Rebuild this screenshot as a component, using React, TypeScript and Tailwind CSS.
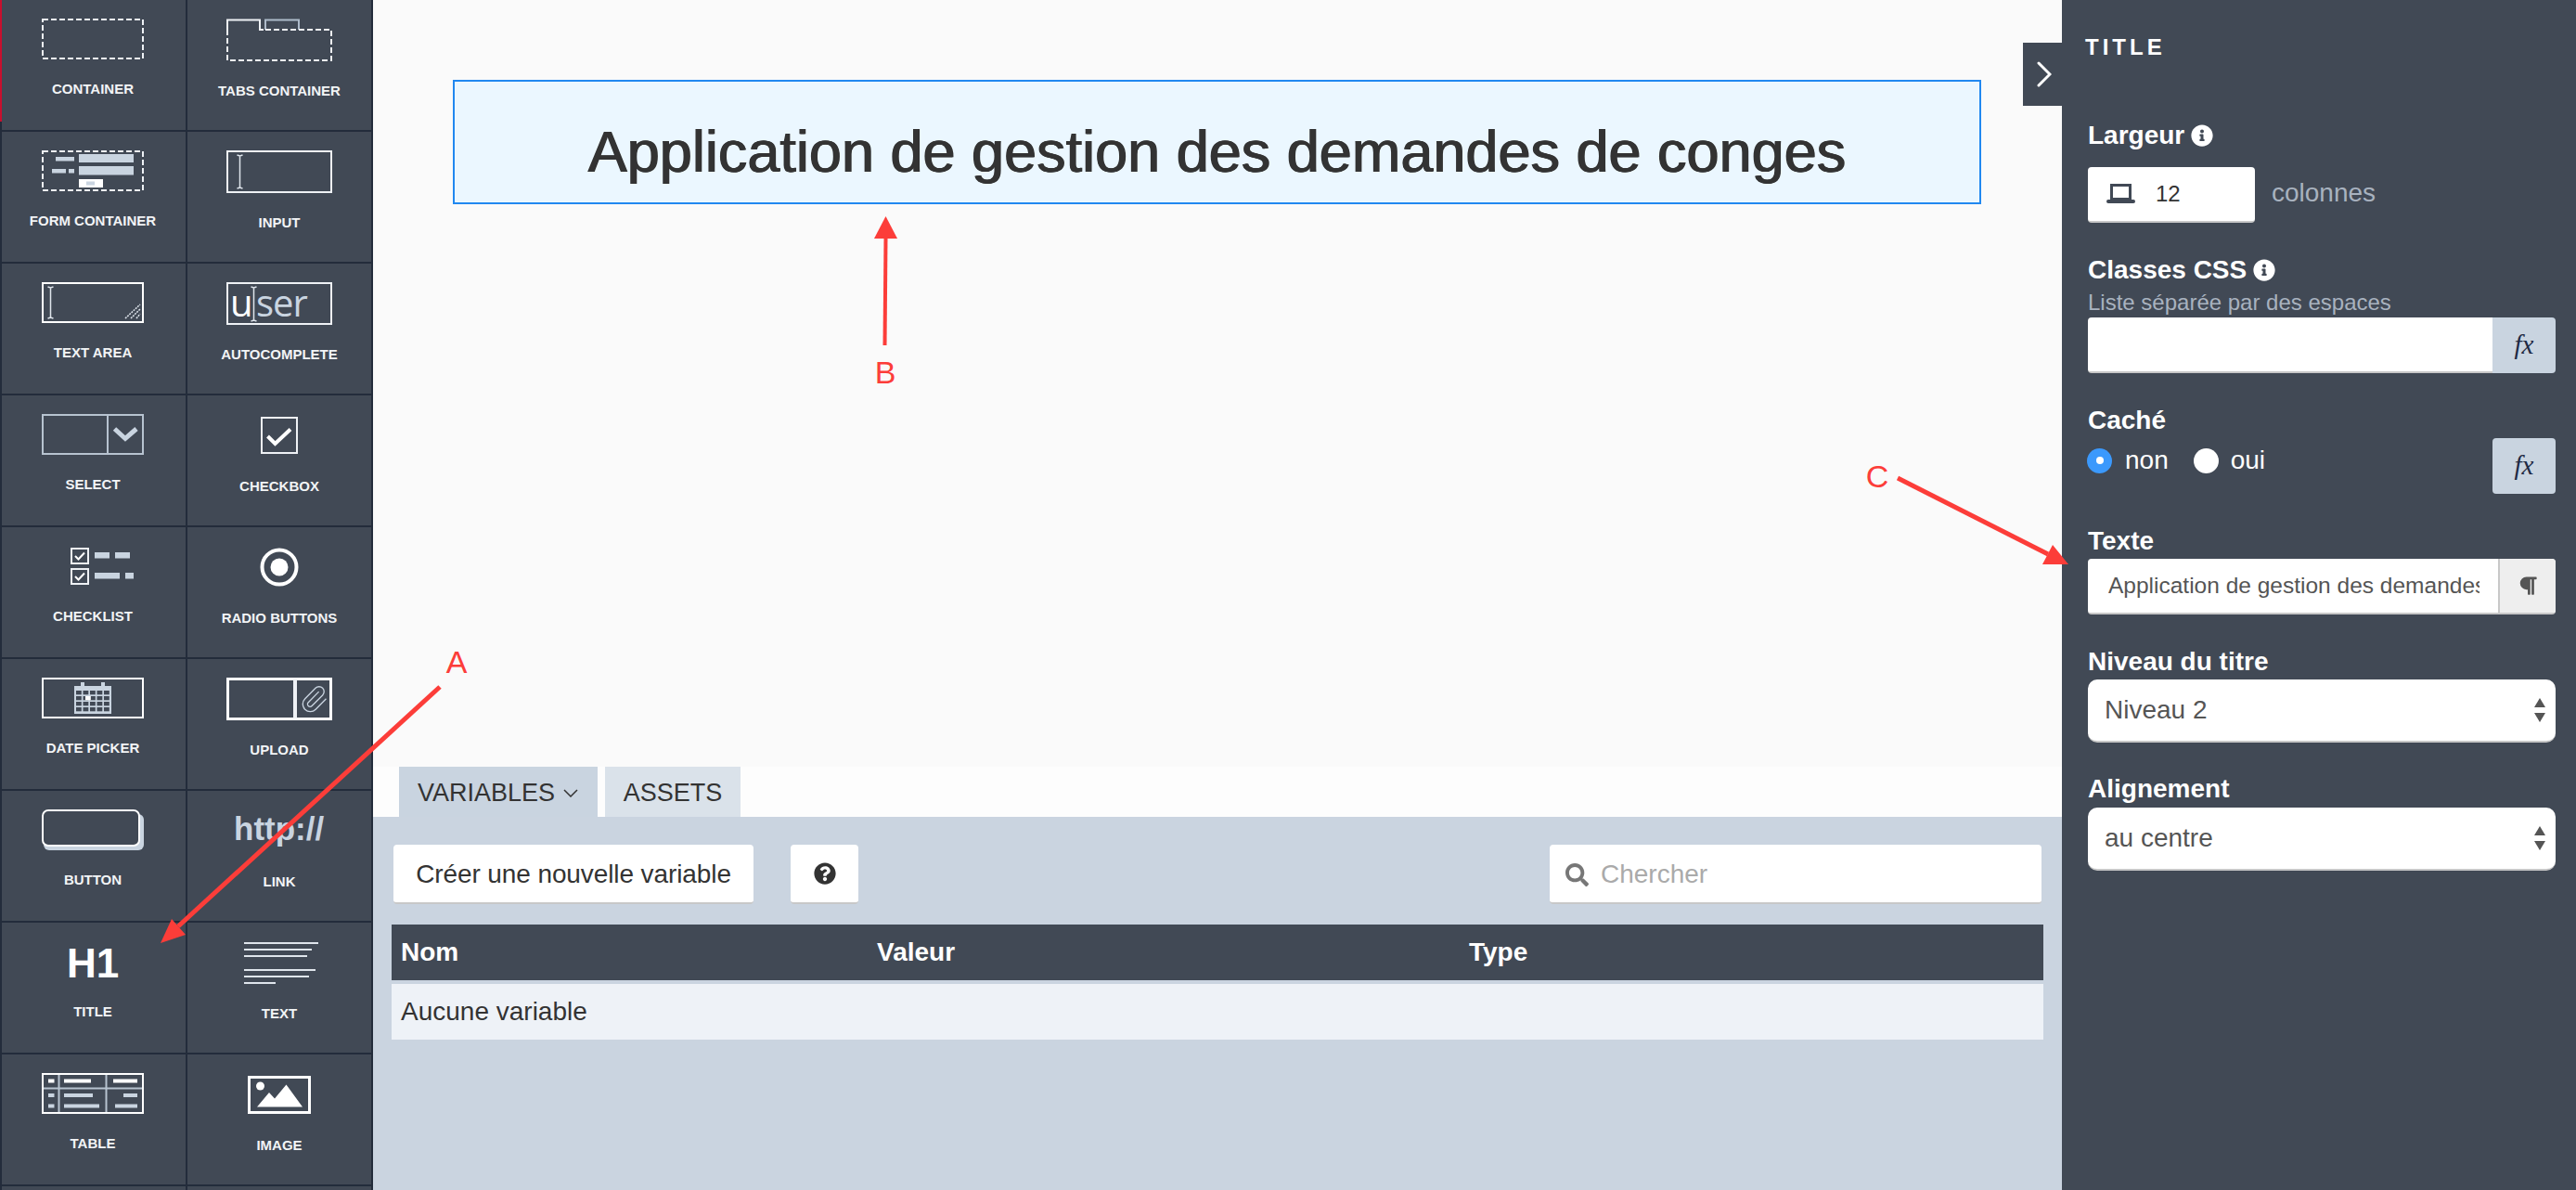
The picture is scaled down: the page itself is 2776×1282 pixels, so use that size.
import type { ReactNode } from "react";
import { FaInfoCircle, FaParagraph, FaQuestionCircle, FaSearch } from "react-icons/fa";

const BAR = "#c9d4e0";
const CELL = "#414955";

const Frame = ({ w = 110, h = 44, children }: { w?: number; h?: number; children: ReactNode }) => (
  <svg width={w} height={h} viewBox={`0 0 ${w} ${h}`} fill="none" className="block shrink-0 overflow-visible">
    {children}
  </svg>
);

const Cursor = ({ x, y1, y2 }: { x: number; y1: number; y2: number }) => (
  <path
    d={`M${x} ${y1}V${y2}M${x - 3} ${y1 - 1}L${x} ${y1}L${x + 3} ${y1 - 1}M${x - 3} ${y2 + 1}L${x} ${y2}L${x + 3} ${y2 + 1}`}
    stroke="#dfe5ec"
    strokeWidth="1.5"
  />
);

const Dashed = () => <rect x="1" y="1" width="108" height="42" stroke="#eef1f5" strokeWidth="2" strokeDasharray="6 3" />;

const ContainerIcon = () => (
  <Frame>
    <Dashed />
  </Frame>
);

const TabsIcon = () => (
  <Frame w={114} h={46}>
    <path d="M1 12V1.500H36V12H40" stroke="#eef1f5" strokeWidth="2" />
    <path d="M42 12V1.500H78V12" stroke="#aebbca" strokeWidth="2" />
    <path d="M42 12H113V45H1V12" stroke="#eef1f5" strokeWidth="2" strokeDasharray="6 3" />
  </Frame>
);

const FormIcon = () => (
  <Frame>
    <Dashed />
    <g fill={BAR}>
      <rect x="15" y="7" width="20" height="4.500" />
      <rect x="40" y="4" width="59" height="9" />
      <rect x="11" y="20" width="15" height="4.500" />
      <rect x="29" y="20" width="6" height="4.500" />
      <rect x="40" y="17" width="59" height="9.500" />
    </g>
    <rect x="40" y="31" width="26" height="9" fill="#fff" />
    <rect x="48" y="33.500" width="9" height="4" fill={BAR} />
  </Frame>
);

const InputIcon = () => (
  <Frame w={114} h={46}>
    <rect x="1" y="1" width="112" height="44" stroke="#eef1f5" strokeWidth="2" />
    <Cursor x={14.500} y1={6} y2={40} />
  </Frame>
);

const TextAreaIcon = () => (
  <Frame>
    <rect x="1" y="1" width="108" height="42" stroke="#fff" strokeWidth="2" />
    <Cursor x={9.500} y1={6} y2={38} />
    <path d="M90 39L106 24M96 39L106 29M102 39L106 34" stroke="#dfe5ec" strokeWidth="1.500" strokeDasharray="2 1" />
  </Frame>
);

const AutocompleteIcon = () => (
  <Frame w={114} h={46}>
    <rect x="1" y="1" width="112" height="44" stroke="#eef1f5" strokeWidth="2" />
    <text x="4" y="37" fontFamily="'Open Sans', sans-serif" fontSize="40" fill="#fff">u</text>
    <text x="32" y="37" fontFamily="'Open Sans', sans-serif" fontSize="40" letterSpacing="-1" fill={BAR}>ser</text>
    <Cursor x={29.500} y1={6} y2={41} />
  </Frame>
);

const SelectIcon = () => (
  <Frame>
    <rect x="1" y="1" width="108" height="42" stroke="#b7c3d0" strokeWidth="2" />
    <path d="M71 1V43" stroke="#b7c3d0" strokeWidth="2" />
    <path d="M78.500 16L90 26.500L102 16" stroke={BAR} strokeWidth="5" />
  </Frame>
);

const CheckboxIcon = () => (
  <Frame w={114} h={46}>
    <rect x="38" y="4" width="38" height="38" stroke="#eef1f5" strokeWidth="2" />
    <path d="M44.500 24L52.500 32L69 16.500" stroke="#fff" strokeWidth="4" />
  </Frame>
);

const MiniBox = ({ y }: { y: number }) => (
  <>
    <rect x="32" y={y} width="18" height="16" stroke="#eef1f5" strokeWidth="2" />
    <path d={`M36 ${y + 8}L39.500 ${y + 11.500}L46 ${y + 4.500}`} stroke="#fff" strokeWidth="2" />
  </>
);

const ChecklistIcon = () => (
  <Frame>
    <MiniBox y={3} />
    <MiniBox y={25} />
    <g fill={BAR}>
      <rect x="57" y="7" width="16" height="6.500" />
      <rect x="79" y="7" width="16" height="6.500" />
      <rect x="57" y="29" width="27" height="6.500" />
      <rect x="90" y="29" width="9" height="6.500" />
    </g>
  </Frame>
);

const RadioIcon = () => (
  <Frame w={114} h={46}>
    <circle cx="57" cy="23" r="18.500" stroke="#fff" strokeWidth="4" />
    <circle cx="57" cy="23" r="9.500" fill="#fff" />
  </Frame>
);

const DateIcon = () => (
  <Frame>
    <rect x="1" y="1" width="108" height="42" stroke="#fff" strokeWidth="2" />
    <rect x="35" y="9" width="40" height="30" fill={BAR} />
    <rect x="42" y="5" width="4" height="6" fill={BAR} />
    <rect x="64" y="5" width="4" height="6" fill={BAR} />
    <g fill={CELL}>
      {[14, 20, 26, 32].flatMap((y) =>
        [37, 44.500, 52, 59.500, 67].map((x) => <rect key={`${x}-${y}`} x={x} y={y} width="5.800" height="4.300" />)
      )}
    </g>
    <rect x="47" y="20" width="5.800" height="4.300" fill="#fff" />
  </Frame>
);

const UploadIcon = () => (
  <Frame w={114} h={46}>
    <rect x="1.500" y="1.500" width="111" height="43" stroke="#fff" strokeWidth="3" />
    <path d="M74 2V44" stroke="#eef1f5" strokeWidth="4" />
    <g transform="translate(78 7) scale(1.350)" stroke={BAR} strokeWidth="1">
      <path d="m16 6-8.414 8.586a2 2 0 0 0 2.829 2.828l8.586-8.586a4 4 0 0 0-5.657-5.657l-8.379 8.551a6 6 0 1 0 8.485 8.485l8.379-8.551" />
    </g>
  </Frame>
);

const ButtonIcon = () => (
  <Frame>
    <rect x="2" y="5" width="108" height="39" rx="6" fill={BAR} />
    <rect x="1" y="1" width="104" height="38" rx="6" fill={CELL} stroke="#fff" strokeWidth="2" />
  </Frame>
);

const LinkIcon = () => (
  <Frame w={114} h={46}>
    <text x="8" y="33" fontFamily="'Liberation Sans', Arial, sans-serif" fontWeight="700" fontSize="35" fill={BAR}>http://</text>
  </Frame>
);

const TitleIcon = () => (
  <Frame>
    <text x="55" y="39" textAnchor="middle" fontFamily="'Liberation Sans', Arial, sans-serif" fontWeight="700" fontSize="44" fill="#fff">H1</text>
  </Frame>
);

const TextIcon = () => (
  <Frame w={114} h={46}>
    <path
      d="M19 2H99M19 9H92M19 16H87M19 31H96M19 38H89M19 45H53"
      stroke="#dfe5ec"
      strokeWidth="2"
    />
  </Frame>
);

const TableIcon = () => (
  <Frame>
    <path d="M1 16.500H109M18.500 1V43M69.500 1V43" stroke="#b7c3d0" strokeWidth="2" />
    <rect x="1" y="1" width="108" height="42" stroke="#fff" strokeWidth="2" />
    <g fill="#fff">
      <rect x="7" y="6.500" width="6.500" height="4" />
      <rect x="24" y="6.500" width="29" height="4" />
      <rect x="77" y="6.500" width="26" height="4" />
    </g>
    <g fill={BAR}>
      <rect x="7" y="22" width="6.500" height="4" />
      <rect x="24" y="22" width="31" height="4" />
      <rect x="88" y="22" width="15" height="4" />
      <rect x="7" y="33.500" width="6.500" height="4" />
      <rect x="24" y="33.500" width="38" height="4" />
      <rect x="79" y="33.500" width="24" height="4" />
    </g>
  </Frame>
);

const ImageIcon = () => (
  <Frame w={114} h={46}>
    <rect x="24.500" y="4.500" width="65" height="38" stroke="#fff" strokeWidth="3" />
    <circle cx="36.500" cy="14" r="4.500" fill="#fff" />
    <path d="M33 36.500L46 21L52 27.500L64.500 12.500L82 36.500Z" fill="#fff" />
  </Frame>
);

const widgets: { label: string; icon: ReactNode }[] = [
  { label: "CONTAINER", icon: <ContainerIcon /> },
  { label: "TABS CONTAINER", icon: <TabsIcon /> },
  { label: "FORM CONTAINER", icon: <FormIcon /> },
  { label: "INPUT", icon: <InputIcon /> },
  { label: "TEXT AREA", icon: <TextAreaIcon /> },
  { label: "AUTOCOMPLETE", icon: <AutocompleteIcon /> },
  { label: "SELECT", icon: <SelectIcon /> },
  { label: "CHECKBOX", icon: <CheckboxIcon /> },
  { label: "CHECKLIST", icon: <ChecklistIcon /> },
  { label: "RADIO BUTTONS", icon: <RadioIcon /> },
  { label: "DATE PICKER", icon: <DateIcon /> },
  { label: "UPLOAD", icon: <UploadIcon /> },
  { label: "BUTTON", icon: <ButtonIcon /> },
  { label: "LINK", icon: <LinkIcon /> },
  { label: "TITLE", icon: <TitleIcon /> },
  { label: "TEXT", icon: <TextIcon /> },
  { label: "TABLE", icon: <TableIcon /> },
  { label: "IMAGE", icon: <ImageIcon /> },
];

const Label = ({ children }: { children: ReactNode }) => (
  <div className="flex h-8 items-center gap-[7px] text-[28px] leading-8 font-bold text-white">{children}</div>
);

const Fx = ({ className }: { className: string }) => (
  <div className={`flex h-[60px] w-[68px] shrink-0 items-center justify-center rounded-r-[4px] bg-[#c9d4e0] font-['Liberation_Serif',serif] text-[29px] text-[#1f2a44] italic ${className}`}>
    fx
  </div>
);

const SelectBox = ({ value, className }: { value: string; className: string }) => (
  <div className={`flex h-[68px] items-center justify-between rounded-[10px] border-b-2 border-[#c8c8c8] bg-white pr-[10px] pl-[18px] text-[28px] text-[#555] ${className}`}>
    <span>{value}</span>
    <svg width="14" height="26" viewBox="0 0 14 26" fill="#555">
      <path d="M7 0L13 10H1Z" />
      <path d="M7 26L13 16H1Z" />
    </svg>
  </div>
);

const Sidebar = () => (
  <aside className="relative grid w-[402px] shrink-0 grid-cols-[198px_198px] content-start gap-[2px] overflow-hidden bg-[#232c3b] px-[2px]">
    <div className="absolute top-0 left-0 h-[131px] w-[2px] bg-[#c8102e]" />
    {widgets.map((w, i) => (
      <div key={w.label} className={`flex h-[140px] flex-col items-center bg-[#414955] pt-5 ${i % 2 === 0 ? "pr-[2px]" : ""}`}>
        {w.icon}
        <span className="mt-[23px] text-[15px] leading-[18px] font-bold text-[#f2f4f6]">{w.label}</span>
      </div>
    ))}
    <div className="h-[140px] bg-[#414955]" />
    <div className="h-[140px] bg-[#414955]" />
  </aside>
);

const VariablesPanel = () => (
  <section className="h-[402px] bg-[#cad4e0] px-5 pt-[30px]">
    <div className="flex h-16 items-stretch px-[2px] text-[28px] text-[#333]">
      <button className="w-[388px] rounded-[4px] border-b-2 border-[#c8c8c8] bg-white pt-[2px] tracking-[-0.1px]">Créer une nouvelle variable</button>
      <button className="ml-[40px] flex w-[73px] items-center justify-center rounded-[4px] border-b-2 border-[#c8c8c8] bg-white">
        <FaQuestionCircle size={24} color="#333" />
      </button>
      <div className="ml-auto flex w-[530px] items-center rounded-[4px] border-b-2 border-[#c8c8c8] bg-white pt-[2px] pl-[17px] text-[#aaa]">
        <FaSearch size={25} color="#777" />
        <span className="ml-[13px]">Chercher</span>
      </div>
    </div>
    <div className="mt-[22px] flex h-[60px] items-center bg-[#414955] pl-[10px] text-[28px] font-bold text-white">
      <span className="w-[513px]">Nom</span>
      <span className="w-[638px]">Valeur</span>
      <span>Type</span>
    </div>
    <div className="mt-1 flex h-[60px] items-center bg-[#eef2f7] pl-[10px] text-[28px] text-[#333]">Aucune variable</div>
  </section>
);

const Canvas = () => (
  <main className="flex min-w-0 flex-1 flex-col">
    <div className="flex-1 bg-[#fafafa] pt-[86px] pr-[87px] pl-[86px]">
      <div className="flex h-[134px] items-center justify-center border-2 border-[#2188f0] bg-[#ebf7ff] pt-5">
        <h1 className="text-[63px] text-[#333] [text-shadow:0.7px_0_0_#333,-0.7px_0_0_#333]">Application de gestion des demandes de conges</h1>
      </div>
    </div>
    <div className="flex h-[54px] gap-2 bg-[#fdfdfd] pl-[28px] text-[27px] text-[#333]">
      <div className="flex w-[214px] items-center gap-[9px] bg-[#c9d4e0] pt-[2px] pl-[20px]">
        VARIABLES
        <svg width="16" height="9" viewBox="0 0 16 9" fill="none" stroke="#333" strokeWidth="1.500">
          <path d="M1 1L8 8L15 1" />
        </svg>
      </div>
      <div className="flex w-[146px] items-center justify-center bg-[#dae2ea] pt-[2px]">ASSETS</div>
    </div>
    <VariablesPanel />
  </main>
);

const Properties = () => (
  <aside className="relative w-[554px] shrink-0 bg-[#414955] pt-[39px] pr-[22px] pl-7">
    <div className="absolute top-[46px] -left-[42px] flex h-[68px] w-[42px] items-center justify-center bg-[#414955] pl-[3px]">
      <svg width="16" height="28" viewBox="0 0 16 28" fill="none" stroke="#fff" strokeWidth="3" strokeLinecap="round">
        <path d="M2 2L14 14L2 26" />
      </svg>
    </div>
    <div className="-ml-[3px] text-[24px] leading-6 font-bold tracking-[4px] text-white">TITLE</div>

    <div className="mt-[67px]">
      <Label>
        Largeur <FaInfoCircle size={24} color="#fff" />
      </Label>
    </div>
    <div className="mt-[18px] flex items-center">
      <div className="flex h-[60px] w-[180px] items-center rounded-[4px] border-b-2 border-[#c8c8c8] bg-white pl-5 text-[24px] text-[#333]">
        <svg width="31" height="22" viewBox="0 0 31 22" fill="none">
          <rect x="5.500" y="1.500" width="20" height="15" stroke="#414955" strokeWidth="3" />
          <rect x="0" y="17" width="31" height="4" rx="2" fill="#414955" />
        </svg>
        <span className="ml-[22px]">12</span>
      </div>
      <span className="ml-[18px] -translate-y-[2px] text-[28px] text-[#a8b2bf]">colonnes</span>
    </div>

    <div className="mt-[35px]">
      <Label>
        Classes CSS <FaInfoCircle size={24} color="#fff" />
      </Label>
    </div>
    <div className="mt-[5px] text-[24px] leading-7 text-[#a8b2bf]">Liste séparée par des espaces</div>
    <div className="mt-[2px] flex">
      <input readOnly className="h-[60px] min-w-0 flex-1 rounded-l-[4px] border-b-2 border-[#c8c8c8] bg-white" />
      <Fx className="" />
    </div>

    <div className="mt-[35px]">
      <Label>Caché</Label>
    </div>
    <div className="mt-[3px] flex h-[60px] justify-between">
      <div className="flex h-12 items-center text-[28px] text-white">
        <span className="-ml-[1px] flex size-[27px] items-center justify-center rounded-full bg-[#3b99fc]">
          <span className="size-[8px] rounded-full bg-white" />
        </span>
        <span className="ml-[14px]">non</span>
        <span className="ml-[27px] size-[27px] rounded-full bg-white" />
        <span className="ml-[13px]">oui</span>
      </div>
      <Fx className="rounded-[4px]" />
    </div>

    <div className="mt-[35px]">
      <Label>Texte</Label>
    </div>
    <div className="mt-[3px] flex h-[60px] overflow-hidden rounded-[4px] border-b-2 border-[#c8c8c8] bg-white">
      <input
        readOnly
        value="Application de gestion des demandes de conges"
        className="mr-[20px] ml-[22px] min-w-0 flex-1 text-[24.500px] text-[#555] outline-none"
      />
      <div className="flex w-[62px] shrink-0 items-center justify-center border-l-2 border-[#c8c8c8] bg-[#eee]">
        <FaParagraph size={22} color="#555" />
      </div>
    </div>

    <div className="mt-[35px]">
      <Label>Niveau du titre</Label>
    </div>
    <SelectBox value="Niveau 2" className="mt-[3px]" />

    <div className="mt-[34px]">
      <Label>Alignement</Label>
    </div>
    <SelectBox value="au centre" className="mt-1" />
  </aside>
);

// red review marks drawn on top of the screenshot
const Annotations = () => (
  <svg width="2776" height="1282" viewBox="0 0 2776 1282" className="pointer-events-none absolute inset-0" fontFamily="'Liberation Sans', Arial, sans-serif" fontSize="34" fill="#fc3d39">
    <path d="M474 740L192 998" stroke="#fc3d39" strokeWidth="5" />
    <path d="M173 1016L185 990L200 1007Z" />
    <path d="M954.500 257L953.500 372" stroke="#fc3d39" strokeWidth="4" />
    <path d="M954.500 233L942 257H967Z" />
    <path d="M2045 515L2207 597" stroke="#fc3d39" strokeWidth="5" />
    <path d="M2229 608L2212 587L2201 608Z" />
    <text x="492" y="725" textAnchor="middle">A</text>
    <text x="954" y="413" textAnchor="middle">B</text>
    <text x="2023" y="525" textAnchor="middle">C</text>
  </svg>
);

export default function App() {
  return (
    <div className="relative flex h-[1282px] w-[2776px] overflow-hidden font-['Liberation_Sans',Arial,sans-serif]">
      <Sidebar />
      <Canvas />
      <Properties />
      <Annotations />
    </div>
  );
}
